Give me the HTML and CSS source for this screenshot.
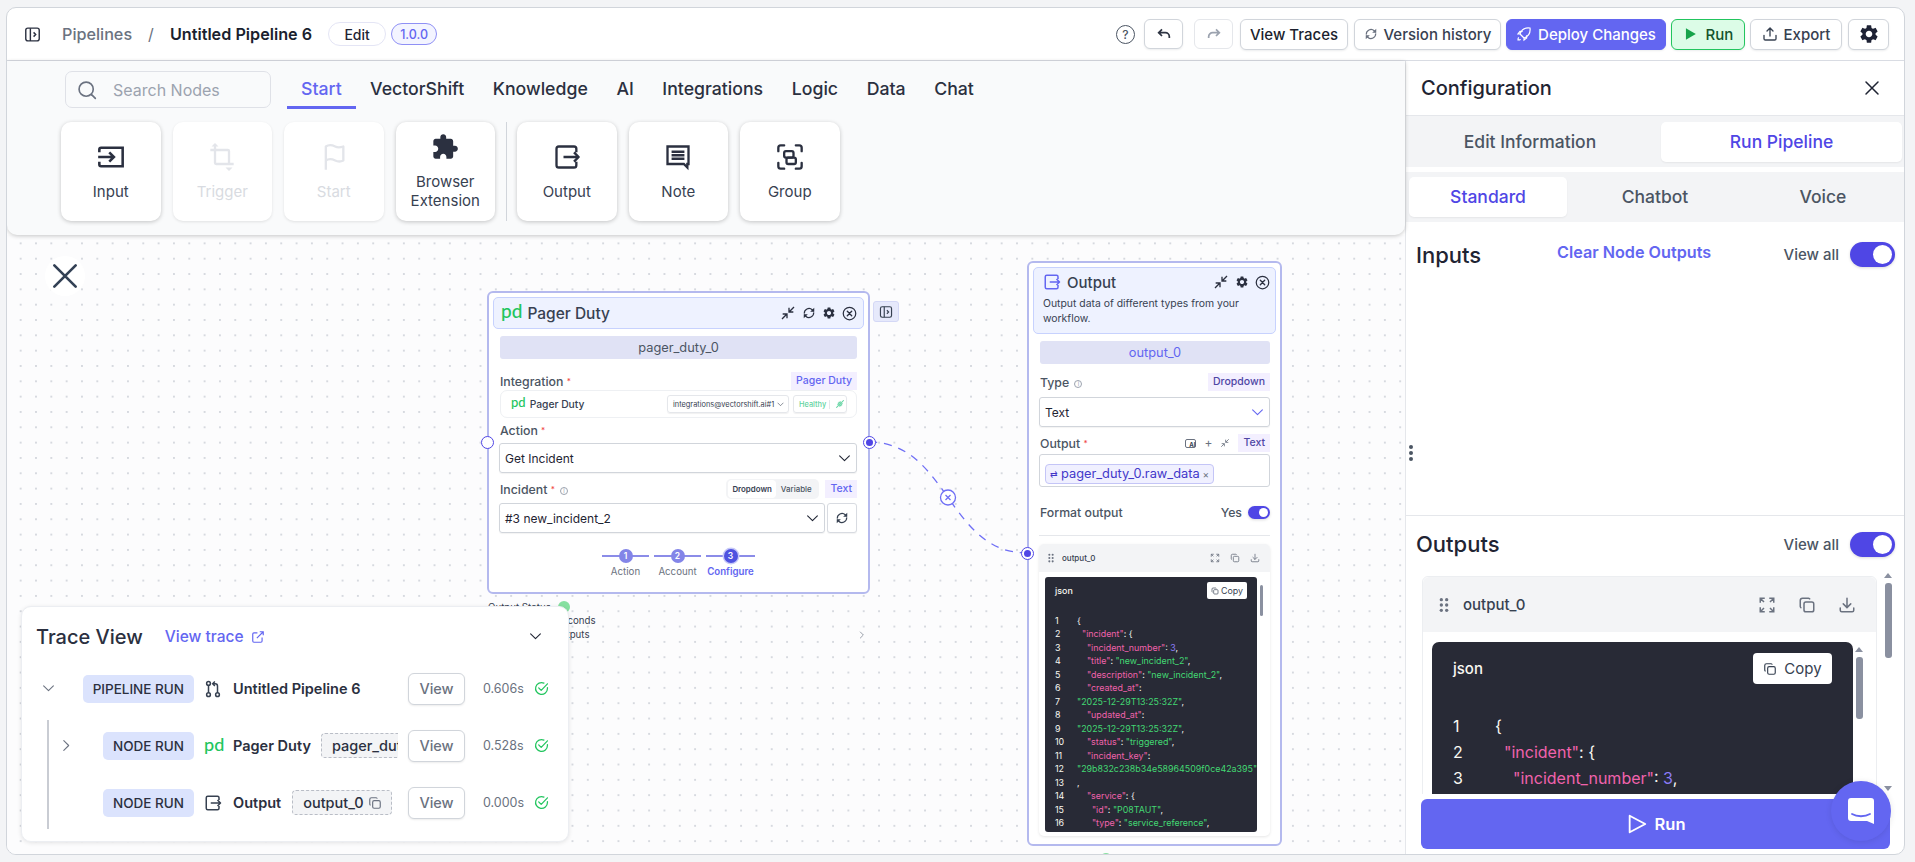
FILE: index.html
```html
<!DOCTYPE html>
<html lang="en">
<head>
<meta charset="utf-8">
<title>Untitled Pipeline 6</title>
<link rel="stylesheet" href="styles.css">
</head>
<body>
<svg class="sprite" aria-hidden="true">
  <symbol id="gear" viewBox="0 0 24 24"><path fill="currentColor" d="M19.14 12.94c.04-.3.06-.61.06-.94 0-.32-.02-.64-.07-.94l2.03-1.58a.49.49 0 0 0 .12-.61l-1.92-3.32a.488.488 0 0 0-.59-.22l-2.39.96c-.5-.38-1.03-.7-1.62-.94l-.36-2.54a.484.484 0 0 0-.48-.41h-3.84c-.24 0-.43.17-.47.41l-.36 2.54c-.59.24-1.13.57-1.62.94l-2.39-.96c-.22-.08-.47 0-.59.22L2.74 8.87c-.12.21-.08.47.12.61l2.03 1.58c-.05.3-.09.63-.09.94s.02.64.07.94l-2.03 1.58a.49.49 0 0 0-.12.61l1.92 3.32c.12.22.37.29.59.22l2.39-.96c.5.38 1.03.7 1.62.94l.36 2.54c.05.24.24.41.48.41h3.84c.24 0 .44-.17.47-.41l.36-2.54c.59-.24 1.13-.56 1.62-.94l2.39.96c.22.08.47 0 .59-.22l1.92-3.32c.12-.22.07-.47-.12-.61l-2.01-1.58zM12 15.6c-1.98 0-3.6-1.62-3.6-3.6s1.62-3.6 3.6-3.6 3.6 1.62 3.6 3.6-1.62 3.6-3.6 3.6z"/></symbol>
  <symbol id="puzzle" viewBox="0 0 24 24"><path fill="currentColor" d="M20.5 11H19V7c0-1.1-.9-2-2-2h-4V3.5C13 2.12 11.88 1 10.5 1S8 2.12 8 3.5V5H4c-1.1 0-1.99.9-1.99 2v3.8H3.5c1.49 0 2.7 1.21 2.7 2.7s-1.21 2.7-2.7 2.7H2V20c0 1.1.9 2 2 2h3.8v-1.5c0-1.49 1.21-2.7 2.7-2.7 1.49 0 2.7 1.21 2.7 2.7V22H17c1.1 0 2-.9 2-2v-4h1.5c1.38 0 2.5-1.12 2.5-2.5S21.88 11 20.5 11z"/></symbol>
  <symbol id="input" viewBox="0 0 24 24"><path fill="none" stroke="currentColor" stroke-width="2.200" d="M2 8V5.500A1.500 1.500 0 0 1 3.500 4h18.500v16H3.500A1.500 1.500 0 0 1 2 18.500V16M1 12h13M10.500 8l4 4-4 4"/></symbol>
  <symbol id="output" viewBox="0 0 24 24"><path fill="none" stroke="currentColor" stroke-width="2" stroke-linejoin="round" d="M20 8V5a2 2 0 0 0-2-2H5a2 2 0 0 0-2 2v14a2 2 0 0 0 2 2h13a2 2 0 0 0 2-2v-3M9 12h13M18 8l4 4-4 4"/></symbol>
  <symbol id="crop" viewBox="0 0 24 24"><path fill="none" stroke="currentColor" stroke-width="2" d="M2 6h15a1 1 0 0 1 1 1v12M6 1v16a1 1 0 0 0 1 1h15"/><path fill="currentColor" d="M6 0l3 3H3zM18 24l-3-3h6z"/></symbol>
  <symbol id="flag" viewBox="0 0 24 24"><path fill="none" stroke="currentColor" stroke-width="2" stroke-linejoin="round" d="M5 23V3c3-2 6-1 8 0s4 1 7 0v12c-3 1.500-5 1-7 0s-5-2-8 0"/></symbol>
  <symbol id="note" viewBox="0 0 24 24"><path fill="none" stroke="currentColor" stroke-width="2" d="M3 3h18v15h-1v3l-3-3H3zM6.500 7.500h11M6.500 10.500h11M6.500 13.500h11"/></symbol>
  <symbol id="group" viewBox="0 0 24 24"><path fill="none" stroke="currentColor" stroke-width="2" stroke-linecap="round" d="M2 7V4a2 2 0 0 1 2-2h3M17 2h3a2 2 0 0 1 2 2v3M22 17v3a2 2 0 0 1-2 2h-3M7 22H4a2 2 0 0 1-2-2v-3"/><rect x="7" y="7" width="8" height="5.500" rx="1.500" fill="none" stroke="currentColor" stroke-width="2"/><rect x="9" y="12.500" width="8" height="5.500" rx="1.500" fill="none" stroke="currentColor" stroke-width="2"/></symbol>
  <symbol id="panel" viewBox="0 0 24 24"><rect x="2.500" y="3" width="19" height="18" rx="3" fill="none" stroke="currentColor" stroke-width="2"/><path fill="none" stroke="currentColor" stroke-width="2" d="M9 3v18M13.500 9l3 3-3 3"/></symbol>
  <symbol id="search" viewBox="0 0 24 24"><circle cx="11" cy="11" r="8.500" fill="none" stroke="currentColor" stroke-width="2"/><path stroke="currentColor" stroke-width="2" stroke-linecap="round" d="M17.500 17.500L22 22"/></symbol>
  <symbol id="x" viewBox="0 0 24 24"><path fill="none" stroke="currentColor" stroke-width="2" stroke-linecap="round" d="M4 4l16 16M20 4L4 20"/></symbol>
  <symbol id="chev" viewBox="0 0 24 24"><path fill="none" stroke="currentColor" stroke-width="2" stroke-linecap="round" stroke-linejoin="round" d="M3 7l9 9 9-9"/></symbol>
  <symbol id="collapse" viewBox="0 0 24 24"><path fill="none" stroke="currentColor" stroke-width="2" d="M3 21l7-7M4 13.500h6.500V20M21 3l-7 7M20 10.500h-6.500V4"/></symbol>
  <symbol id="expand" viewBox="0 0 24 24"><path fill="none" stroke="currentColor" stroke-width="2" d="M3 9V3h6M15 3h6v6M21 15v6h-6M9 21H3v-6M3 3l5 5M21 3l-5 5M21 21l-5-5M3 21l5-5"/></symbol>
  <symbol id="sync" viewBox="0 0 24 24"><path fill="none" stroke="currentColor" stroke-width="2" d="M4 13a8 8 0 0 1 13.500-6.500L20 9M20 11a8 8 0 0 1-13.500 6.500L4 15"/><path fill="currentColor" d="M21 3v7h-7zM3 21v-7h7z"/></symbol>
  <symbol id="xc" viewBox="0 0 24 24"><circle cx="12" cy="12" r="10" fill="none" stroke="currentColor" stroke-width="2"/><path stroke="currentColor" stroke-width="2.200" stroke-linecap="round" d="M8.500 8.500l7 7M15.500 8.500l-7 7"/></symbol>
  <symbol id="copy" viewBox="0 0 24 24"><rect x="8" y="8" width="13" height="13" rx="2.500" fill="none" stroke="currentColor" stroke-width="2"/><path fill="none" stroke="currentColor" stroke-width="2" d="M16 4.500A2.500 2.500 0 0 0 14 3H6a3 3 0 0 0-3 3v8a2.500 2.500 0 0 0 1.500 2"/></symbol>
  <symbol id="download" viewBox="0 0 24 24"><path fill="none" stroke="currentColor" stroke-width="2" stroke-linecap="round" d="M12 3v12M7 10.500l5 5 5-5M3 16v3a2 2 0 0 0 2 2h14a2 2 0 0 0 2-2v-3"/></symbol>
  <symbol id="grip" viewBox="0 0 24 24"><g fill="currentColor"><circle cx="8" cy="4" r="2.500"/><circle cx="16" cy="4" r="2.500"/><circle cx="8" cy="12" r="2.500"/><circle cx="16" cy="12" r="2.500"/><circle cx="8" cy="20" r="2.500"/><circle cx="16" cy="20" r="2.500"/></g></symbol>
  <symbol id="check" viewBox="0 0 24 24"><path fill="none" stroke="currentColor" stroke-width="2" stroke-linecap="round" stroke-linejoin="round" d="M21.500 10.500V12a9.500 9.500 0 1 1-5.600-8.700M7.500 11l4 4L21.500 4.500"/></symbol>
  <symbol id="branch" viewBox="0 0 24 24"><g fill="none" stroke="currentColor" stroke-width="2"><circle cx="6" cy="4.500" r="2.500"/><circle cx="6" cy="19.500" r="2.500"/><circle cx="18" cy="19.500" r="2.500"/><path d="M6 7v10M18 17V8a3 3 0 0 0-3-3h-3M14.500 2L11.500 5l3 3"/></g></symbol>
  <symbol id="ext" viewBox="0 0 24 24"><path fill="none" stroke="currentColor" stroke-width="2" d="M11 5H5a2 2 0 0 0-2 2v12a2 2 0 0 0 2 2h12a2 2 0 0 0 2-2v-6M10 14L21 3M15 3h6v6"/></symbol>
</svg>

<div class="app">
  <header class="topbar">
    <div class="top-left">
      <svg class="ic18 side-ic"><use href="#panel"/></svg>
      <span class="crumb">Pipelines</span>
      <span class="crumb-sep">/</span>
      <span class="crumb-title">Untitled Pipeline 6</span>
      <button class="edit-btn">Edit</button>
      <span class="version">1.0.0</span>
    </div>
    <div class="top-right">
      <span class="help">?</span>
      <button class="tb sq"><svg class="ic16" viewBox="0 0 24 24"><path fill="none" stroke="currentColor" stroke-width="2.600" d="M9 5L4 10l5 5M4 10h10a6 6 0 0 1 6 6v2"/></svg></button>
      <button class="tb sq faint"><svg class="ic16" viewBox="0 0 24 24"><path fill="none" stroke="currentColor" stroke-width="2.600" d="M15 5l5 5-5 5M20 10H10a6 6 0 0 0-6 6v2"/></svg></button>
      <button class="tb w108">View Traces</button>
      <button class="tb w147"><svg class="ic14 gray"><use href="#sync"/></svg>Version history</button>
      <button class="tb deploy"><svg class="ic16" viewBox="0 0 24 24"><path fill="none" stroke="currentColor" stroke-width="1.800" d="M9 15l-3-3C8 6 13 2 21 3c1 8-3 13-9 15zM6 12H3l3-4h4M12 18v3l4-3v-4M4 17c-1 1-1 3-1 4 1 0 3 0 4-1"/></svg>Deploy Changes</button>
      <button class="tb run-top"><svg class="ic14" viewBox="0 0 24 24"><path fill="#16a34a" d="M5 2l17 10L5 22z"/></svg>Run</button>
      <button class="tb w92"><svg class="ic16" viewBox="0 0 24 24"><path fill="none" stroke="currentColor" stroke-width="2" stroke-linecap="round" d="M12 15V3M7.500 7.500L12 3l4.500 4.500M3 14v5a2 2 0 0 0 2 2h14a2 2 0 0 0 2-2v-5"/></svg>Export</button>
      <button class="tb gearb"><svg class="ic22"><use href="#gear"/></svg></button>
    </div>
  </header>

  <div class="main">
    <section class="workspace">
      <div class="toolbar">
        <div class="tool-row">
          <div class="search"><svg class="ic20"><use href="#search"/></svg><span>Search Nodes</span></div>
          <nav class="tabs">
            <span class="tab active">Start</span>
            <span class="tab">VectorShift</span>
            <span class="tab">Knowledge</span>
            <span class="tab">AI</span>
            <span class="tab">Integrations</span>
            <span class="tab">Logic</span>
            <span class="tab">Data</span>
            <span class="tab">Chat</span>
          </nav>
        </div>
        <div class="tiles">
          <div class="tile"><svg class="ic28"><use href="#input"/></svg><span>Input</span></div>
          <div class="tile off"><svg class="ic28"><use href="#crop"/></svg><span>Trigger</span></div>
          <div class="tile off"><svg class="ic28"><use href="#flag"/></svg><span>Start</span></div>
          <div class="tile two"><svg class="ic28"><use href="#puzzle"/></svg><span>Browser Extension</span></div>
          <div class="tile-sep"></div>
          <div class="tile"><svg class="ic28"><use href="#output"/></svg><span>Output</span></div>
          <div class="tile"><svg class="ic28"><use href="#note"/></svg><span>Note</span></div>
          <div class="tile"><svg class="ic28"><use href="#group"/></svg><span>Group</span></div>
        </div>
      </div>

      <div class="canvas">
        <button class="canvas-close"><svg class="ic24"><use href="#x"/></svg></button>

        <svg class="edge" viewBox="0 0 175 125">
          <path d="M7 7C86 7 86 118 165 118" fill="none" stroke="#6f6ff5" stroke-width="1.300" stroke-dasharray="8 7"/>
          <circle cx="86" cy="62.500" r="7.500" fill="#fff" stroke="#6f6ff5" stroke-width="1.300"/>
          <path d="M83.500 60l5 5M88.500 60l-5 5" stroke="#6f6ff5" stroke-width="1.300"/>
        </svg>

        <article class="node pager">
          <span class="handle left"></span>
          <span class="handle right on"></span>
          <div class="node-head">
            <span class="pd big">pd</span><span class="node-title">Pager Duty</span>
            <span class="head-icons">
              <svg class="ic-col"><use href="#collapse"/></svg>
              <svg class="ic14"><use href="#sync"/></svg>
              <svg class="ic14"><use href="#gear"/></svg>
              <svg class="ic15"><use href="#xc"/></svg>
            </span>
          </div>
          <div class="name-bar">pager_duty_0</div>
          <div class="field-head first"><span class="lab">Integration <i>*</i></span><span class="tag">Pager Duty</span></div>
          <div class="integ">
            <span class="pd small">pd</span><span class="integ-name">Pager Duty</span>
            <span class="mini acct">integrations@vectorshift.ai#1<svg class="ic7"><use href="#chev"/></svg></span>
            <span class="mini healthy">Healthy<em></em><svg class="ic9" viewBox="0 0 24 24"><path fill="none" stroke="currentColor" stroke-width="2.500" d="M3 21l5-5M21 3l-5 5M7 9l8 8M9 7l8 8M6 12l6 6M12 6l6 6"/></svg></span>
          </div>
          <div class="field-head act"><span class="lab">Action <i>*</i></span></div>
          <div class="select"><span>Get Incident</span><svg class="ic12"><use href="#chev"/></svg></div>
          <div class="field-head inc"><span class="lab">Incident <i>*</i> <b class="info">i</b></span>
            <span class="head-side"><span class="seg"><span class="seg-on">Dropdown</span><span>Variable</span></span><span class="tag">Text</span></span>
          </div>
          <div class="sel-row">
            <div class="select"><span>#3 new_incident_2</span><svg class="ic12"><use href="#chev"/></svg></div>
            <button class="refresh"><svg class="ic14"><use href="#sync"/></svg></button>
          </div>
          <div class="steps">
            <div class="step"><span class="dot">1</span><span class="st-lab">Action</span></div>
            <div class="step"><span class="dot">2</span><span class="st-lab">Account</span></div>
            <div class="step cur"><span class="dot">3</span><span class="st-lab">Configure</span></div>
          </div>
          <button class="side-toggle"><svg class="ic14"><use href="#panel"/></svg></button>
          <div class="node-foot">
            <div class="foot-row"><span>Output Status</span><span class="ok"></span></div>
            <div class="foot-line">Run time: 0.53 seconds</div>
            <div class="foot-line">Show Inputs / Outputs<svg class="ic8 foot-chev"><use href="#chev"/></svg></div>
          </div>
        </article>

        <article class="node out">
          <span class="handle left on"></span>
          <div class="node-head tall">
            <div class="out-title-row">
              <svg class="ic18 indigo"><use href="#output"/></svg><span class="node-title indigo">Output</span>
              <span class="head-icons">
                <svg class="ic-col"><use href="#collapse"/></svg>
                <svg class="ic14"><use href="#gear"/></svg>
                <svg class="ic15"><use href="#xc"/></svg>
              </span>
            </div>
            <p class="node-desc">Output data of different types from your workflow.</p>
          </div>
          <div class="name-bar indigo">output_0</div>
          <div class="field-head t-type"><span class="lab">Type <b class="info">i</b></span><span class="tag dk">Dropdown</span></div>
          <div class="select"><span>Text</span><svg class="ic12 indigo"><use href="#chev"/></svg></div>
          <div class="field-head t-output"><span class="lab">Output <i>*</i></span>
            <span class="head-side tight"><span class="ai-ic">AI</span><span class="plus">+</span><svg class="ic9 gray"><use href="#collapse"/></svg><span class="tag dk">Text</span></span>
          </div>
          <div class="textarea"><span class="chip-var"><span class="arrows">⇄</span> pager_duty_0.raw_data <span class="chip-x">×</span></span></div>
          <div class="format"><span class="lab">Format output</span><span class="yes">Yes<span class="switch sm"></span></span></div>
          <div class="out-div"></div>
          <div class="ocard">
            <div class="ocard-head">
              <svg class="ic9 gray"><use href="#grip"/></svg><span class="ocard-name">output_0</span>
              <span class="ocard-icons"><svg class="ic9 gray"><use href="#expand"/></svg><svg class="ic9 gray"><use href="#copy"/></svg><svg class="ic9 gray"><use href="#download"/></svg></span>
            </div>
            <div class="code node-code">
              <div class="code-head"><span>json</span><button class="copy"><svg class="cp-ic"><use href="#copy"/></svg>Copy</button></div>
              <div class="lines">
                <div class="ln"><b>1</b><code>{</code></div>
                <div class="ln"><b>2</b><code>  <u>"incident"</u>: {</code></div>
                <div class="ln"><b>3</b><code>    <u>"incident_number"</u>: <s>3</s>,</code></div>
                <div class="ln"><b>4</b><code>    <u>"title"</u>: <q>"new_incident_2"</q>,</code></div>
                <div class="ln"><b>5</b><code>    <u>"description"</u>: <q>"new_incident_2"</q>,</code></div>
                <div class="ln"><b>6</b><code>    <u>"created_at"</u>:</code></div>
                <div class="ln"><b>7</b><code><q>"2025-12-29T13:25:32Z"</q>,</code></div>
                <div class="ln"><b>8</b><code>    <u>"updated_at"</u>:</code></div>
                <div class="ln"><b>9</b><code><q>"2025-12-29T13:25:32Z"</q>,</code></div>
                <div class="ln"><b>10</b><code>    <u>"status"</u>: <q>"triggered"</q>,</code></div>
                <div class="ln"><b>11</b><code>    <u>"incident_key"</u>:</code></div>
                <div class="ln"><b>12</b><code><q>"29b832c238b34e58964509f0ce42a395"</q></code></div>
                <div class="ln"><b>13</b><code>,</code></div>
                <div class="ln"><b>14</b><code>    <u>"service"</u>: {</code></div>
                <div class="ln"><b>15</b><code>      <u>"id"</u>: <q>"P08TAUT"</q>,</code></div>
                <div class="ln"><b>16</b><code>      <u>"type"</u>: <q>"service_reference"</q>,</code></div>
                <div class="ln"><b>17</b><code>      <u>"summary"</u>: <q>"Default"</q>,</code></div>
              </div>
            </div>
            <span class="sb node-sb"></span>
          </div>
          <span class="out-status"></span>
        </article>

        <aside class="trace">
          <div class="trace-head">
            <span class="trace-title">Trace View</span>
            <a class="trace-link">View trace<svg class="ic14"><use href="#ext"/></svg></a>
            <svg class="ic12 trace-chev"><use href="#chev"/></svg>
          </div>
          <span class="trace-line"></span>
          <div class="t-row">
            <div class="t-lead"><svg class="ic12 chev-a"><use href="#chev"/></svg><span class="badge">PIPELINE RUN</span></div>
            <div class="t-mid"><svg class="ic18"><use href="#branch"/></svg><span class="t-name">Untitled Pipeline 6</span></div>
            <button class="t-view">View</button><span class="t-time">0.606s</span><svg class="ic15 t-ok"><use href="#check"/></svg>
          </div>
          <div class="t-row">
            <div class="t-lead"><svg class="ic12 chev-b"><use href="#chev"/></svg><span class="badge">NODE RUN</span></div>
            <div class="t-mid"><span class="pd trace-pd">pd</span><span class="t-name">Pager Duty</span><span class="t-chip">pager_duty_0</span></div>
            <button class="t-view">View</button><span class="t-time">0.528s</span><svg class="ic15 t-ok"><use href="#check"/></svg>
          </div>
          <div class="t-row">
            <div class="t-lead"><span class="badge">NODE RUN</span></div>
            <div class="t-mid"><svg class="ic18 t-out"><use href="#output"/></svg><span class="t-name">Output</span><span class="t-chip fit">output_0<svg class="ic14 gray"><use href="#copy"/></svg></span></div>
            <button class="t-view">View</button><span class="t-time">0.000s</span><svg class="ic15 t-ok"><use href="#check"/></svg>
          </div>
        </aside>
      </div>
    </section>

    <aside class="panel">
      <div class="panel-head"><span>Configuration</span><svg class="ic18"><use href="#x"/></svg></div>
      <div class="seg-tabs upper"><span class="st">Edit Information</span><span class="st on">Run Pipeline</span></div>
      <div class="seg-tabs lower"><span class="st on">Standard</span><span class="st">Chatbot</span><span class="st">Voice</span></div>
      <div class="inputs">
        <span class="sec-title">Inputs</span>
        <a class="clear">Clear Node Outputs</a>
        <span class="view-all">View all<span class="switch"></span></span>
        <span class="resize-dots"></span>
      </div>
      <div class="outputs">
        <div class="out-head"><span class="sec-title">Outputs</span><span class="view-all">View all<span class="switch"></span></span></div>
        <div class="pcard">
          <div class="pcard-head">
            <svg class="ic16 gray grip"><use href="#grip"/></svg><span class="pcard-name">output_0</span>
            <span class="pcard-icons"><svg class="ic18 gray"><use href="#expand"/></svg><svg class="ic18 gray"><use href="#copy"/></svg><svg class="ic18 gray"><use href="#download"/></svg></span>
          </div>
          <div class="code panel-code">
            <div class="code-head"><span>json</span><button class="copy"><svg class="cp-ic"><use href="#copy"/></svg>Copy</button></div>
            <div class="lines">
              <div class="ln"><b>1</b><code>{</code></div>
              <div class="ln"><b>2</b><code>  <u>"incident"</u>: {</code></div>
              <div class="ln"><b>3</b><code>    <u>"incident_number"</u>: <s>3</s>,</code></div>
            </div>
          </div>
        </div>
        <span class="sb outer"></span><span class="sb inner"></span>
        <span class="sb-arrow up outer-a"></span><span class="sb-arrow up inner-a"></span><span class="sb-arrow down outer-d"></span>
      </div>
      <div class="run-foot"><button class="run-big"><svg class="ic22" viewBox="0 0 24 24"><path fill="none" stroke="currentColor" stroke-width="2" stroke-linejoin="round" d="M4 3l17 9-17 9z"/></svg>Run</button></div>
    </aside>
  </div>
</div>

<button class="chat"><svg viewBox="0 0 28 28" class="chat-ic"><path fill="#fff" d="M4 1h20a3 3 0 0 1 3 3v23l-7-3H4a3 3 0 0 1-3-3V4a3 3 0 0 1 3-3z"/><path fill="none" stroke="#6366f1" stroke-width="1.800" stroke-linecap="round" d="M5 17c5 3 13 3 18 0"/></svg></button>
</body>
</html>
```

FILE: styles.css
```css
* { box-sizing: border-box; }
html, body { margin: 0; height: 100%; }
body {
  width: 1915px; height: 862px; overflow: hidden; padding: 7px 10px 7px 6px;
  background: #f3f4f6; font-family: Inter, "Liberation Sans", sans-serif; color: #1f2433;
  position: relative;
}
button { font-family: inherit; cursor: pointer; }
.sprite { display: none; }
svg { flex: none; display: block; }
.ic7 { width: 7px; height: 7px; } .ic8 { width: 8px; height: 8px; } .ic9 { width: 10px; height: 10px; }
.ic12 { width: 13px; height: 13px; } .ic14 { width: 14px; height: 14px; }
.ic15 { width: 15px; height: 15px; } .ic16 { width: 16px; height: 16px; } .ic18 { width: 18px; height: 18px; }
.ic20 { width: 20px; height: 20px; } .ic22 { width: 22px; height: 22px; } .ic24 { width: 24px; height: 24px; }
.ic28 { width: 28px; height: 28px; }
.ic-col { width: 16px; height: 16px; }
.gray { color: #6b7280; }
.indigo { color: #6366f1; }

.app {
  height: 848px; display: flex; flex-direction: column; background: #fff;
  border: 1px solid #d1d5db; border-radius: 10px; overflow: hidden;
}
.topbar { height: 53px; flex: none; display: flex; justify-content: space-between; align-items: center; border-bottom: 1px solid #d9dce3; padding: 0 15px 0 17px; }
.top-left { display: flex; align-items: center; }
.side-ic { color: #2b3040; width: 17px; height: 17px; }
.crumb { margin-left: 21px; font-size: 16.200px; font-weight: 500; color: #6b7280; }
.crumb-sep { margin: 0 16px; color: #6b7280; font-size: 16px; }
.crumb-title { font-size: 16.200px; font-weight: 600; color: #1b1f2e; }
.edit-btn { margin-left: 16px; width: 58px; height: 24px; border: 1px solid #e4e5f5; border-radius: 12px; background: #fff; font-size: 14px; font-weight: 500; color: #1f2433; padding: 0; }
.version { margin-left: 5px; width: 46px; height: 22px; border: 1px solid #8f90f5; border-radius: 11px; background: #f3f4ff; font-size: 12.500px; font-weight: 500; color: #6366f1; display: flex; align-items: center; justify-content: center; }

.top-right { display: flex; align-items: center; }
.help { width: 19px; height: 19px; border: 1.800px solid #4b5563; border-radius: 50%; display: flex; align-items: center; justify-content: center; font-size: 12px; font-weight: 500; color: #4b5563; margin-right: 9px; }
.tb { height: 31px; border: 1px solid #d1d5db; border-radius: 6px; background: #fff; font-size: 15px; font-weight: 500; color: #1b1f2e; display: flex; align-items: center; justify-content: center; gap: 6px; padding: 0; box-shadow: 0 1px 2px rgba(16,24,40,.08); margin-left: 6px; }
.tb.sq { width: 39px; height: 30px; color: #2f3543; margin-left: 0; margin-right: 5px; }
.tb.sq + .tb.sq { width: 39px; margin-right: 0; margin-left: 6px; }
.tb.faint { color: #9ca3af; border-color: #e5e7eb; box-shadow: none; }
.w108 { width: 108px; margin-left: 7px; }
.w147 { width: 147px; color: #374151; }
.w92 { width: 92px; color: #374151; margin-left: 5px; }
.deploy { width: 160px; background: #6366f1; border-color: #6366f1; color: #fff; margin-left: 5px; }
.run-top { width: 74px; background: #dcfce7; border-color: #22c55e; color: #14532d; gap: 9px; margin-left: 5px; }
.gearb { width: 41px; color: #1e2235; margin-left: 6px; }

.main { flex: 1; display: flex; min-height: 0; }
.workspace { width: 1398px; flex: none; display: flex; flex-direction: column; position: relative; }
.toolbar { height: 174px; flex: none; background: #f9fafb; border-radius: 0 0 10px 10px; box-shadow: 0 1px 4px rgba(0,0,0,.22); position: relative; z-index: 3; padding: 10px 0 0 54px; }
.tool-row { display: flex; padding-left: 4px; }
.search { width: 206px; height: 37px; border: 1px solid #dfe1e7; border-radius: 7px; display: flex; align-items: center; padding-left: 11px; gap: 16px; color: #6b7280; background: #f9fafb; }
.search span { font-size: 16px; color: #9ca3af; }
.tabs { display: flex; margin-left: 16px; height: 38px; }
.tab { padding: 0 14.300px; font-size: 17.700px; font-weight: 500; color: #2b3040; line-height: 36px; }
.tab.active { color: #6366f1; border-bottom: 3px solid #6366f1; padding: 0 14px; }
.tiles { display: flex; align-items: stretch; gap: 12px; margin-top: 13px; height: 99px; }
.tile { width: 99.500px; background: #fff; border-radius: 10px; box-shadow: 0 1px 4px rgba(0,0,0,.22); display: flex; flex-direction: column; align-items: center; padding-top: 21px; color: #2b3040; font-size: 15px; text-align: center; }
.tile span { margin-top: 12px; line-height: 18.500px; color: #374151; }
.tile.off { color: #e3e5ea; box-shadow: 0 1px 3px rgba(0,0,0,.1); }
.tile.off span { color: #d8dbe1; }
.tile.two { padding-top: 11px; }
.tile.two span { margin-top: 12px; }
.tile-sep { width: 1px; background: #d1d5db; margin: 0 -1.500px; }

.canvas { flex: 1; position: relative; overflow: hidden; background-color: #fcfcfd;
  background-image: radial-gradient(circle, #d6d9df .8px, transparent 1.200px);
  background-size: 15.330px 15.330px; background-position: 6px .7px; }
.canvas-close { position: absolute; left: 38px; top: 21px; width: 40px; height: 40px; border-radius: 50%; border: 0; background: #fff; color: #334155; display: flex; align-items: center; justify-content: center; padding: 0; }
.canvas-close svg { width: 32px; height: 32px; }
.edge { position: absolute; left: 855px; top: 200px; width: 175px; height: 125px; }

.node { position: absolute; background: #fff; border: 2px solid #b4b9ee; border-radius: 6px; z-index: 1; }
.node.pager { left: 480px; top: 56px; width: 383px; height: 303px; padding: 4px 4px 0; }
.node.out { left: 1020px; top: 26px; width: 255px; height: 585px; padding: 4px 4px 0; }
.handle { position: absolute; width: 13px; height: 13px; border-radius: 50%; background: #fff; border: 1.500px solid #5046e5; z-index: 2; }
.handle.on::after { content: ""; position: absolute; inset: 2px; border-radius: 50%; background: #5046e5; }
.pager .handle.left { left: -8px; top: 143px; }
.pager .handle.right { right: -8px; top: 143px; }
.out .handle.left { left: -8px; top: 284px; }

.node-head { height: 32px; background: #eef2ff; border: 1px solid #c7d2fe; border-radius: 5px; display: flex; align-items: center; padding: 0 6px 0 7px; }
.node-head.tall { height: 67px; display: block; padding: 5px 5px 0 9px; }
.pd { color: #22c55e; font-weight: 500; font-family: Lato, Inter, sans-serif; }
.pd.big { font-size: 19px; line-height: 19px; margin-top: -5px; }
.pd.small { font-size: 13px; line-height: 13px; margin-top: -3px; }
.node-title { margin-left: 5px; font-size: 15.500px; font-weight: 500; color: #374151; }
.head-icons { margin-left: auto; display: flex; align-items: center; gap: 6px; color: #2b3040; }
.out-title-row { display: flex; align-items: center; height: 18px; }
.out-title-row .node-title { font-size: 15px; margin-left: 6px; }
.node-desc { margin: 5px 0 0; font-size: 10.400px; line-height: 15px; color: #374151; }
.name-bar { height: 23px; margin: 7px 7px 0; background: #e0e2f5; border-radius: 3px; text-align: center; font-size: 12.800px; line-height: 23px; color: #4b5563; }
.name-bar.indigo { color: #6366f1; margin: 7px 6px 0 7px; }
.field-head { display: flex; justify-content: space-between; align-items: center; margin: 0 7px; height: 18px; }
.field-head.first { margin-top: 13px; }
.field-head.act { margin-top: 3px; }
.lab { font-size: 12.300px; font-weight: 500; color: #4b5563; }
.lab i { color: #ef4444; font-style: normal; font-size: 8px; vertical-align: 2px; }
.info { display: inline-block; width: 8px; height: 8px; border: 1px solid #9ca3af; border-radius: 50%; font-size: 6px; line-height: 6px; text-align: center; font-weight: 400; color: #9ca3af; vertical-align: 1px; margin-left: 2px; }
.tag { background: #f3efff; color: #6366f1; font-size: 10.500px; font-weight: 500; height: 18px; line-height: 18px; padding: 0 5px; white-space: nowrap; }
.tag.dk { color: #4f46a5; }
.integ { height: 28px; margin: 0 7px; border: 1px solid #eef0f3; border-radius: 7px; display: flex; align-items: center; padding: 0 9px 0 10px; font-size: 10.300px; color: #374151; font-weight: 500; }
.integ-name { margin-left: 4px; }
.mini { height: 18px; border: 1px solid #e5e7eb; border-radius: 3px; box-shadow: 0 1px 1px rgba(0,0,0,.06); display: flex; align-items: center; font-size: 7.400px; }
.acct { margin-left: auto; width: 122px; padding-left: 5px; gap: 3px; color: #374151; white-space: nowrap; font-weight: 400; }
.healthy { margin-left: 4px; width: 54px; padding-left: 5px; color: #5fd3a0; font-weight: 500; }
.healthy em { width: 1px; height: 9px; background: #e5e7eb; margin: 0 5px 0 3px; }
.healthy svg { color: #5fd3a0; }
.select { height: 30px; margin: 4px 7px 0 6px; border: 1px solid #d1d5db; border-radius: 3px; display: flex; align-items: center; justify-content: space-between; padding: 0 5px; font-size: 12px; color: #1f2433; box-shadow: 0 1px 1px rgba(0,0,0,.05); }
.field-head.inc { margin-top: 6px; height: 20px; }
.head-side { display: flex; align-items: center; gap: 6px; }
.seg { width: 93px; height: 20px; background: #f3f4f6; border-radius: 5px; display: flex; align-items: center; font-size: 7.900px; color: #4b5563; padding: 1px 2px; gap: 5px; font-weight: 500; }
.seg-on { background: #fff; border-radius: 4px; padding: 0 4px; line-height: 18px; color: #374151; font-weight: 600; }
.sel-row { display: flex; margin: 4px 7px 0 6px; gap: 2px; }
.sel-row .select { margin: 0; flex: 1; }
.refresh { width: 30px; height: 30px; border: 1px solid #d8dbe1; border-radius: 3px; background: #fff; color: #374151; display: flex; align-items: center; justify-content: center; padding: 0; box-shadow: 0 1px 1px rgba(0,0,0,.05); }
.steps { display: flex; justify-content: center; margin-top: 16px; gap: 5px; }
.step { width: 47px; display: flex; flex-direction: column; align-items: center; position: relative; }
.step::before { content: ""; position: absolute; left: 0; right: 0; top: 6px; height: 1.500px; background: #8b8ce8; }
.step.cur { width: 49px; }
.dot { width: 14px; height: 14px; border-radius: 50%; background: #8385e8; color: #fff; font-size: 8.500px; font-weight: 600; display: flex; align-items: center; justify-content: center; position: relative; }
.cur .dot { background: #4f52e0; box-shadow: 0 0 0 1.500px #c7c9f8; }
.st-lab { margin-top: 3px; font-size: 9.700px; color: #6b7280; white-space: nowrap; }
.cur .st-lab { color: #6366f1; font-weight: 600; }
.side-toggle { position: absolute; right: -31px; top: 8px; width: 26px; height: 21px; background: #e6e9fb; border: 1px solid #d4d8f6; border-radius: 3px; color: #374151; padding: 0; display: flex; align-items: center; justify-content: center; }
.node-foot { position: absolute; left: -1px; top: 308px; width: 378px; font-size: 9.700px; color: #374151; }
.foot-row { display: flex; align-items: center; gap: 7px; height: 12px; }
.ok { width: 12px; height: 12px; border-radius: 50%; background: #86e0a0; }
.foot-line { margin-top: 2px; line-height: 12px; position: relative; }
.foot-chev { position: absolute; right: 0; top: 2px; transform: rotate(-90deg); color: #6b7280; }

.field-head.t-type { margin: 9px 6px 0 7px; }
.out .select { margin: 6px 6px 0; }
.field-head.t-output { margin: 7px 6px 0 7px; }
.tight { gap: 8px; }
.ai-ic { font-size: 6px; font-weight: 700; width: 11px; height: 9px; border: 1px solid #6b7280; border-radius: 2px; color: #374151; line-height: 10px; text-align: right; }
.plus { color: #6b7280; font-size: 12px; line-height: 12px; }
.textarea { height: 33px; margin: 2px 6px 0; border: 1px solid #d1d5db; border-radius: 3px; padding: 6px 5px; }
.chip-var { display: inline-flex; align-items: center; height: 20px; border: 1px solid #c4c5f7; background: #f0f0ff; border-radius: 4px; font-size: 12.800px; color: #4338ca; padding: 0 4px; white-space: nowrap; gap: 3px; }
.arrows { font-size: 9px; }
.chip-x { color: #6b7280; font-size: 10px; }
.format { display: flex; justify-content: space-between; align-items: center; margin: 17px 6px 0 7px; height: 16px; }
.yes { display: flex; align-items: center; gap: 6px; font-size: 12.300px; font-weight: 500; color: #4b5563; }
.switch { display: inline-block; width: 45px; height: 25px; background: #4f46e5; border-radius: 13px; position: relative; margin-left: 11px; flex: none; box-shadow: 0 1px 3px rgba(0,0,0,.15); }
.switch::after { content: ""; position: absolute; right: 3px; top: 3px; width: 19px; height: 19px; background: #fff; border-radius: 50%; }
.switch.sm { width: 22px; height: 13px; margin: 0; }
.switch.sm::after { width: 9px; height: 9px; top: 2px; right: 2px; }
.out-div { height: 1px; background: #e5e7eb; margin: 15px 6px 0; }
.ocard { margin: 8px 6px 0; height: 292px; background: #fff; border-radius: 5px; box-shadow: 0 1px 3px rgba(0,0,0,.1); position: relative; }
.ocard-head { height: 28px; background: #f3f4f6; border-radius: 5px 5px 0 0; display: flex; align-items: center; padding: 0 10px 0 7px; }
.ocard-name { margin-left: 6px; font-size: 8px; color: #374151; font-weight: 500; }
.ocard-icons { margin-left: auto; display: flex; gap: 10px; }

.code { background: #282a36; color: #f8f8f2; overflow: hidden; position: relative; }
.code-head { display: flex; justify-content: space-between; align-items: center; }
.copy { background: #fff; border: 0; display: flex; align-items: center; justify-content: center; color: #374151; padding: 0; }
.ln { display: flex; white-space: pre; }
.ln b { font-weight: 400; flex: none; box-sizing: content-box; }
.ln code { font-family: inherit; }
.ln u { text-decoration: none; color: #f062ac; }
.ln q { quotes: none; color: #43d873; }
.ln s { text-decoration: none; color: #8b7cf6; }
.node-code { margin: 5px 0 0 6px; width: 212px; height: 255px; border-radius: 3px; font-size: 8.900px; }
.node-code .code-head { height: 27px; padding: 0 10px; font-weight: 500; }
.node-code .copy { width: 40px; height: 17px; border-radius: 2px; font-size: 8.900px; gap: 2px; }
.node-code .cp-ic { width: 8px; height: 8px; }
.node-code .lines { padding-top: 10px; }
.node-code .ln { line-height: 13.470px; }
.node-code .ln b { width: 22px; padding-left: 10px; }
.sb { position: absolute; width: 3px; background: #8a90a0; border-radius: 3px; }
.node-sb { left: 221px; top: 41px; height: 31px; }
.out-status { position: absolute; left: 71px; bottom: -21px; width: 12px; height: 12px; border-radius: 50%; background: #86e0a0; }

.trace { position: absolute; left: 14px; top: 371px; width: 548px; height: 236px; background: #fff; border: 1px solid #eceef2; border-radius: 10px; box-shadow: 0 1px 4px rgba(0,0,0,.1); z-index: 2; }
.trace-head { display: flex; align-items: center; height: 53px; padding: 6px 0 0 14px; }
.trace-title { font-size: 20px; font-weight: 500; color: #2b3040; }
.trace-link { margin-left: 22px; font-size: 15.500px; font-weight: 500; color: #6366f1; display: flex; align-items: center; gap: 7px; }
.trace-chev { margin-left: auto; margin-right: 26px; color: #1f2433; }
.trace-line { position: absolute; left: 25px; top: 113px; width: 2px; height: 109px; background: #c9ccd3; }
.t-row { display: flex; align-items: center; height: 57px; }
.t-lead { width: 172px; flex: none; display: flex; align-items: center; }
.chev-a { margin-left: 20px; color: #6b7280; }
.chev-b { margin-left: 38px; transform: rotate(-90deg); color: #6b7280; }
.badge { margin-left: auto; height: 28px; background: #dbe3fd; border-radius: 5px; font-size: 13.500px; font-weight: 500; color: #2b3040; display: flex; align-items: center; padding: 0 10px; white-space: nowrap; }
.t-mid { width: 194px; margin-left: 10px; flex: none; display: flex; align-items: center; overflow: hidden; white-space: nowrap; height: 34px; }
.t-mid > .ic18 { color: #374151; }
.t-name { margin-left: 11px; font-size: 14.500px; font-weight: 600; color: #2b3040; }
.trace-pd { font-size: 18px; line-height: 18px; width: 18px; margin-top: -4px; }
.t-chip { margin-left: 10px; height: 25px; display: flex; align-items: center; gap: 4px; background: #f3f4f6; border: 1px dashed #b9bdc6; border-radius: 4px; padding: 0 10px; font-size: 14.500px; font-weight: 500; color: #2b3040; flex: none; }
.t-chip.fit { padding: 0 9px 0 10px; margin-left: 11px; }
.t-view { width: 57px; height: 32px; margin-left: 10px; background: #fff; border: 1px solid #d1d5db; border-radius: 6px; font-size: 14.500px; font-weight: 500; color: #6b7280; padding: 0; box-shadow: 0 1px 2px rgba(0,0,0,.08); }
.t-time { margin-left: 18px; font-size: 12.500px; color: #6b7280; width: 50px; }
.t-ok { color: #22c55e; margin-left: 1px; }

.panel { flex: 1; border-left: 1px solid #e5e7eb; display: flex; flex-direction: column; position: relative; min-width: 0; }
.panel-head { height: 55px; flex: none; border-bottom: 1px solid #e5e7eb; display: flex; align-items: center; justify-content: space-between; padding: 0 23px 0 15px; font-size: 20px; font-weight: 500; color: #1f2433; }
.seg-tabs { background: #f3f4f6; display: flex; flex: none; font-size: 17.500px; font-weight: 500; color: #4b5563; align-items: center; }
.upper { height: 51px; padding: 0 2px 0 0; }
.upper .st { flex: 0 0 255px; text-align: center; padding-right: 7px; }
.upper .st.on { flex: 1; padding-right: 0; }
.st { line-height: 40px; }
.st.on { background: #fff; color: #4f46e5; border-radius: 5px; box-shadow: 0 1px 2px rgba(0,0,0,.06); }
.lower { height: 50px; margin-top: 5px; padding-left: 3px; }
.lower .st { flex: 0 0 158px; text-align: center; }
.lower .st:nth-child(2) { flex: 0 0 176px; }
.lower .st:nth-child(3) { flex: 0 0 160px; }
.inputs { height: 294px; flex: none; border-bottom: 1px solid #e5e7eb; position: relative; }
.sec-title { font-size: 22px; font-weight: 500; color: #1f2433; }
.inputs .sec-title { position: absolute; left: 10px; top: 20px; }
.clear { position: absolute; left: 151px; top: 20px; font-size: 16.200px; font-weight: 600; color: #6366f1; }
.view-all { font-size: 15px; font-weight: 500; color: #4b5563; display: flex; align-items: center; }
.inputs .view-all { position: absolute; right: 9px; top: 20px; }
.resize-dots { position: absolute; left: 3px; top: 229px; width: 4px; height: 4px; border-radius: 50%; background: #4b5563; box-shadow: 0 -6px 0 #4b5563, 0 6px 0 #4b5563; }
.outputs { flex: 1; min-height: 0; overflow: hidden; position: relative; }
.out-head { display: flex; justify-content: space-between; align-items: center; height: 56px; margin-bottom: 4px; padding: 0 9px 0 10px; }
.pcard { margin: 0 0 0 16px; width: 455px; border: 1px solid #eceef1; border-radius: 6px; }
.pcard-head { height: 55px; background: #f3f4f6; border-radius: 6px 6px 0 0; display: flex; align-items: center; padding: 0 20px 0 13px; }
.pcard-name { margin-left: 11px; font-size: 15px; font-weight: 500; color: #374151; }
.pcard-icons { margin-left: auto; display: flex; align-items: center; gap: 22px; color: #6b7280; }
.panel-code { margin: 10px 0 0 9px; width: 421px; height: 200px; border-radius: 7px; font-size: 16px; }
.panel-code .code-head { height: 53px; padding: 0 21px; font-weight: 500; font-size: 15px; }
.panel-code .copy { width: 79px; height: 31px; border-radius: 4px; font-size: 15px; gap: 7px; }
.panel-code .cp-ic { width: 14px; height: 14px; }
.panel-code .lines { padding-top: 18px; }
.panel-code .ln { line-height: 26px; }
.panel-code .ln b { width: 42px; padding-left: 21px; }
.sb.outer { left: 479px; top: 67px; width: 7px; height: 75px; }
.sb.inner { left: 450px; top: 141px; width: 7px; height: 62px; }
.sb-arrow { position: absolute; width: 0; height: 0; border-left: 4px solid transparent; border-right: 4px solid transparent; }
.sb-arrow.up { border-bottom: 5px solid #8a90a0; }
.sb-arrow.down { border-top: 5px solid #8a90a0; }
.outer-a { left: 478px; top: 57px; } .inner-a { left: 449px; top: 131px; } .outer-d { left: 478px; top: 270px; }
.run-foot { flex: none; padding: 5px 14px 5px 15px; height: 60px; }
.run-big { width: 100%; height: 50px; background: #6366f1; border: 0; border-radius: 6px; color: #fff; font-size: 16.500px; font-weight: 600; display: flex; align-items: center; justify-content: center; gap: 7px; }

.chat { position: absolute; left: 1831px; top: 781px; width: 60px; height: 60px; border-radius: 50%; background: #6366f1; border: 0; padding: 0; display: flex; align-items: center; justify-content: center; box-shadow: 0 1px 6px rgba(0,0,0,.1); z-index: 5; }
.chat-ic { width: 28px; height: 28px; }
```
